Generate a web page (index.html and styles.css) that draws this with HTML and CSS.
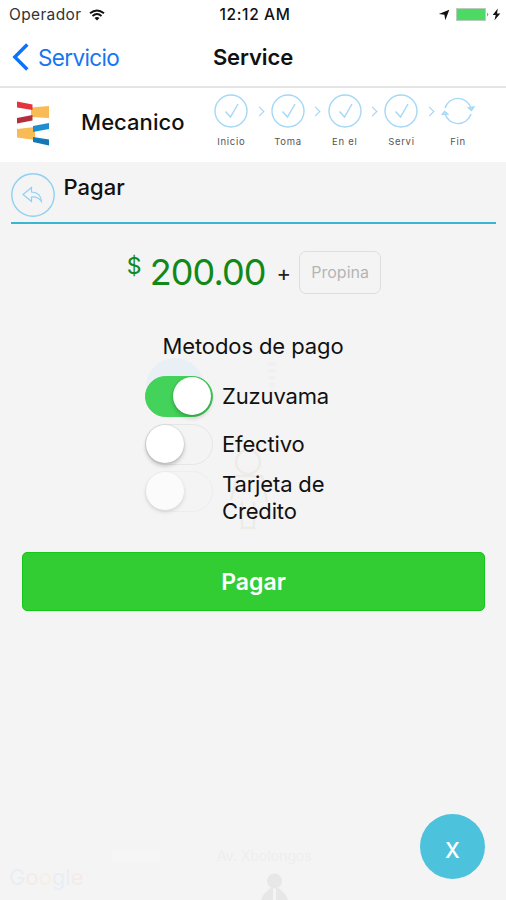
FILE: index.html
```html
<!DOCTYPE html>
<html lang="es">
<head>
<meta charset="utf-8">
<meta name="viewport" content="width=device-width, initial-scale=1">
<title>Service</title>
<link rel="stylesheet" href="styles.css">
</head>
<body>
<div class="screen">
  <div class="statusbar">
    <div class="carrier"><span>Operador</span>
      <svg width="16" height="12" viewBox="0 0 16 12" fill="none" stroke="#111" stroke-width="1.9"><path d="M1 4.3Q8-1.5 15 4.3M3.5 7Q8 3.2 12.5 7"/><path d="M5.5 8.9Q8 7 10.5 8.9L8 11.5Z" fill="#111" stroke="none"/></svg>
    </div>
    <span class="clock">12:12 AM</span>
    <div class="power">
      <svg width="12" height="12" viewBox="0 0 12 12"><path d="M11.3.8 7.3 11.2 6.4 5.7.8 4.9Z" fill="#111"/></svg>
      <svg class="battery" width="33" height="14" viewBox="0 0 33 14"><rect x=".5" y=".5" width="29" height="12" fill="#4cd964" stroke="#b9cdbd"/><path d="M31 4.5q2.5 2 0 4Z" fill="#999"/></svg>
      <svg width="9" height="13" viewBox="0 0 9 13"><path d="M5.8.5.7 7h3L2.5 12.3 8.3 5.4H5Z" fill="#111"/></svg>
    </div>
  </div>
  <header class="navbar">
    <a class="back"><svg width="17" height="28" viewBox="0 0 17 28" fill="none" stroke="#0b72fb" stroke-width="3.4"><path d="M15.3 1.5 2.8 14 15.3 26.5"/></svg><span>Servicio</span></a>
    <h1>Service</h1>
  </header>
  <section class="progress">
    <svg class="logo" width="34" height="45" viewBox="0 0 34 45">
      <path d="M15 6.500 33 5V17L15 16Z" fill="#f8bb55"/><path d="M1 .5 16.500 3.500V9L1 6.500Z" fill="#e6343c"/><path d="M1 17 16.500 14V19.500L1 22.500Z" fill="#b3303a"/>
      <path d="M1 28 19 26V39L1 36.500Z" fill="#f8bb55"/><path d="M17 25 33 22V28L17 31Z" fill="#1d8fd0"/><path d="M17 36 33 38.500V44.500L17 41Z" fill="#1478b6"/>
    </svg>
    <strong class="trade">Mecanico</strong>
    <ol class="steps">
      <li><svg class="ring" viewBox="0 0 34 34"><circle cx="17" cy="17" r="16"/><path d="m11.500 17.500 5 5.500 7.500-13"/></svg><span>Inicio</span></li>
      <li><svg class="ring" viewBox="0 0 34 34"><circle cx="17" cy="17" r="16"/><path d="m11.500 17.500 5 5.500 7.500-13"/></svg><span>Toma</span></li>
      <li><svg class="ring" viewBox="0 0 34 34"><circle cx="17" cy="17" r="16"/><path d="m11.500 17.500 5 5.500 7.500-13"/></svg><span>En el</span></li>
      <li><svg class="ring" viewBox="0 0 34 34"><circle cx="17" cy="17" r="16"/><path d="m11.500 17.500 5 5.500 7.500-13"/></svg><span>Servi</span></li>
      <li><svg class="ring" viewBox="0 0 34 34"><path d="M4 14A13.500 13.500 0 0 1 30 14.500M30 20A13.500 13.500 0 0 1 4 19.500"/><path d="m27.500 14 3 2.500 2.300-3.500ZM1.300 20.500 3.500 17.500l3.200 2.500Z"/></svg><span>Fin</span></li>
    </ol>
  </section>
  <main class="payment">
    <svg class="map" width="506" height="738" viewBox="0 0 506 738">
      <circle cx="175" cy="225" r="29" fill="#e9f0f5"/>
      <g fill="none" stroke="#ecebe8" stroke-width="2.500"><circle cx="248" cy="300" r="12"/><path d="M234 314H262L267 340M236 318 231 338M242 340V366H254V340"/><path d="M272 200V236" stroke="#f0f0f0" stroke-width="7" stroke-dasharray="4 3"/></g>
      <path d="M112 694H160" stroke="#f6f6f6" stroke-width="12"/>
      <g fill="#e7e7e7"><circle cx="274.500" cy="719" r="7.500"/><path d="M261 738Q264 729 273 725V738ZM276 725Q285 729 288 738H276Z"/></g>
    </svg>
    <div class="heading">
      <svg width="44" height="44" viewBox="0 0 44 44" fill="none" stroke="#8fd0f3" stroke-width="1.400"><circle cx="22" cy="22" r="21.200"/><path d="M20.500 14.500 12 21.500l8.500 7v-4.500q6.500-.5 10 4.500-.5-9-10-9.500Z" stroke-width="1.200"/></svg>
      <h2>Pagar</h2>
    </div>
    <div class="amount"><span class="currency">$</span><span class="total">200.00</span><span class="plus">+</span><span class="tip">Propina</span></div>
    <h3>Metodos de pago</h3>
    <div class="methods">
      <div class="method"><i class="switch on"></i><span>Zuzuvama</span></div>
      <div class="method"><i class="switch"></i><span>Efectivo</span></div>
      <div class="method"><i class="switch disabled"></i><span class="card">Tarjeta de<br>Credito</span></div>
    </div>
    <div class="pay">Pagar</div>
    <div class="street">Av. Xbolongos</div>
    <div class="google"><b>G</b><b>o</b><b>o</b><b>g</b><b>l</b><b>e</b></div>
    <div class="close"><span>x</span></div>
  </main>
</div>
</body>
</html>
```

FILE: styles.css
```css
* { box-sizing: border-box; }
body { margin: 0; font-family: Inter, "Liberation Sans", sans-serif; color: #111; background: #fff; }
h1, h2, h3, ol { margin: 0; padding: 0; }
svg { display: block; flex: none; }
span, h1, h2, h3, strong { white-space: nowrap; }
.screen { width: 506px; height: 900px; overflow: hidden; display: flex; flex-direction: column; }
.statusbar { height: 28px; display: grid; grid-template-columns: 1fr auto 1fr; align-items: center; padding: 1px 5px 0 9px; font-size: 15.500px; }
.carrier { display: flex; align-items: center; gap: 8px; letter-spacing: .35px; color: #333; }
.clock { font-weight: 500; letter-spacing: .65px; }
.power { display: flex; justify-content: flex-end; align-items: center; gap: 3px; }
.battery { margin-left: 3px; }
.navbar { height: 60px; display: grid; grid-template-columns: 1fr auto 1fr; align-items: center; padding: 0 12px; border-bottom: 2px solid #e4e4e4; }
.back { display: flex; align-items: center; gap: 9px; color: #1675f2; font-size: 22.500px; letter-spacing: -.65px; }
h1 { font-size: 22px; font-weight: 600; letter-spacing: -.1px; }
.progress { height: 74px; display: flex; align-items: flex-start; }
.logo { margin: 13px 0 0 16px; }
.trade { width: 118px; margin: 20px 0 0 31px; font-size: 22px; line-height: 28px; font-weight: 500; letter-spacing: .05px; }
.steps { margin-top: 6px; padding-left: 4px; display: flex; list-style: none; }
.steps li { position: relative; width: 56.700px; display: flex; flex-direction: column; align-items: center; font-size: 9.500px; line-height: 12px; letter-spacing: .7px; color: #555; }
.steps li + li::before { content: ""; position: absolute; left: -4px; top: 14px; width: 6px; height: 6px; border: solid #a3d0ef; border-width: 1.500px 1.500px 0 0; transform: rotate(45deg); }
.ring { width: 34px; height: 34px; margin-bottom: 8px; fill: none; stroke: #a4d8f7; stroke-width: 1.400; }
.payment { position: relative; flex: 1; display: flex; flex-direction: column; align-items: center; background: #f4f4f4; }
.payment > :not(.map):not(.close):not(.google):not(.street) { position: relative; }
.map { position: absolute; top: 0; left: 0; }
.heading { width: 485px; height: 62px; display: flex; gap: 9px; padding-top: 11px; border-bottom: 2px solid #39b6d2; }
h2 { font-size: 22px; line-height: 28px; font-weight: 500; }
.amount { height: 44px; margin: 26px 0 0 2px; display: flex; align-items: center; color: #118818; }
.currency { font-size: 23px; line-height: 28px; align-self: flex-start; margin-top: 2px; }
.total { font-size: 36px; margin-left: 8px; letter-spacing: -.9px; }
.plus { color: #222; font-size: 22px; margin: 2px 8px 0 11px; }
.tip { width: 82px; height: 43px; border: 1.500px solid #dedede; border-radius: 7px; font-size: 16px; line-height: 40px; text-align: center; color: #b4b4b4; }
h3 { margin-top: 38px; font-size: 22px; line-height: 28px; font-weight: 400; letter-spacing: -.1px; }
.methods { width: 216px; margin-top: 13px; }
.method { display: flex; gap: 9px; align-items: center; height: 47.500px; font-size: 22px; line-height: 27px; letter-spacing: -.15px; }
.switch { width: 68px; height: 41px; flex: none; padding: 1px; border: 1.500px solid #e6e6e6; border-radius: 21px; }
.switch::before { content: ""; display: block; width: 38px; height: 38px; border-radius: 50%; background: #fff; box-shadow: 0 3px 4px #0003, 0 0 2px #0003; margin: -1px; }
.switch.on { background: #43d25a; border-color: #43d25a; }
.switch.on::before { margin-left: 26px; }
.switch.disabled { border-color: #eeeeee; }
.switch.disabled::before { background: #fbfbfb; box-shadow: 0 2px 4px #0002; }
.card { padding-top: 13px; }
.pay { width: 463px; height: 59px; margin: 36px 0 0 1px; border: 1.500px solid #12c91a; border-radius: 5px; background: #32cd32; color: #fff; font-size: 23px; font-weight: 600; line-height: 58px; text-align: center; }
.close { position: absolute; left: 420px; top: 652px; width: 65px; height: 65px; border-radius: 50%; background: #4dc2dc; color: #fff; display: grid; place-items: center; font-size: 28px; }
.close span { padding-top: 2px; }
.street { position: absolute; left: 217px; top: 686px; font-size: 14px; line-height: 16px; color: #eeeeee; }
.google { position: absolute; left: 9px; top: 702px; font-size: 22px; line-height: 26px; color: #e9eef4; }
.google b { font-weight: 400; }
.google b:nth-child(2), .google b:nth-child(6) { color: #f4ebe9; }
.google b:nth-child(3) { color: #f3f1e2; }
```
